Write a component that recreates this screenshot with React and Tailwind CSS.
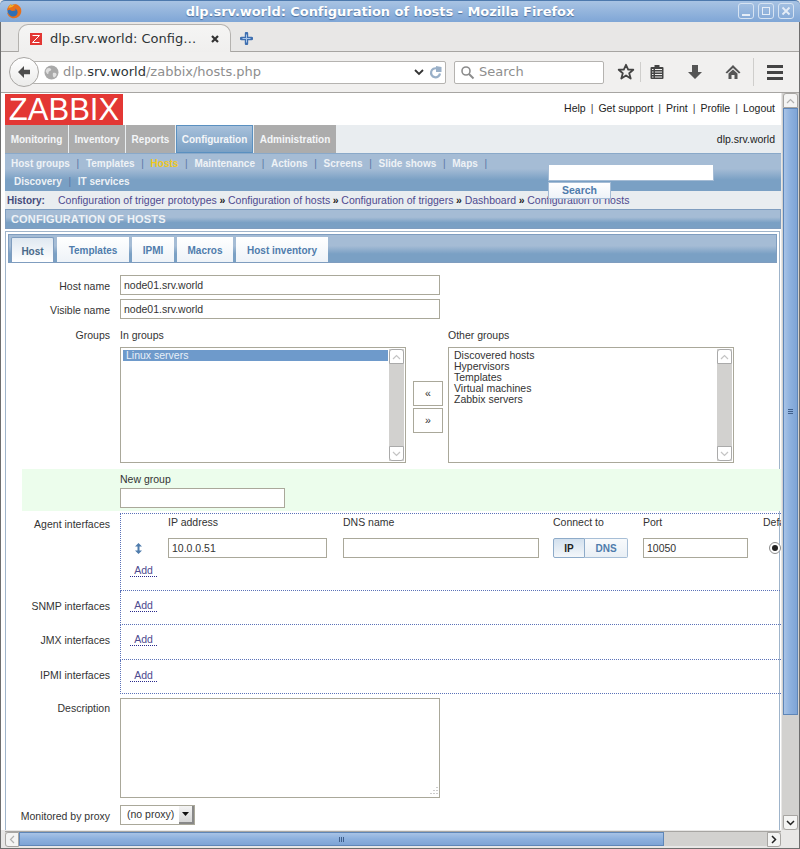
import React from "react";

const page = { fontFamily: '"Liberation Sans", Arial, sans-serif' };
const chrome = { fontFamily: '"DejaVu Sans", sans-serif' };

const blueBar = "bg-[linear-gradient(#a5bcd5_0%,#a5bcd5_40%,#7aa0c4_70%,#7aa0c4_100%)]";

function FirefoxIcon() {
  return (
    <svg width="16" height="16" viewBox="0 0 16 16">
      <circle cx="8" cy="8" r="6.500" fill="#2f6fb5" />
      <path d="M4.500 5c1-1.200 3-1.500 4.500-.8L7 6z" fill="#6fa8dc" />
      <path d="M1 7.500C1.300 4.500 3 2 5.500 1L4.800 3C6.500 1.300 9 .7 11 1.500c2.800 1.200 4.500 3.700 4.300 6.800-.2 3.800-3.300 7-7.300 7-3.700 0-6.500-2.600-7-6l2 2.200c1.300 1.800 3.700 2.500 5.700 1.700 2.300-.9 3.400-3.200 2.700-5.300-.4-1.300-1.500-2.200-2.700-2.500.8.700 1 1.500.8 2.200L6 8 3.800 6.800z" fill="#e8701a" />
      <path d="M2.500 5c.4-1.500 1.500-3 3-4L4.800 3C6 2 7.500 1.500 9 1.500L6 4z" fill="#f6b52a" />
    </svg>
  );
}

function ZabbixFav() {
  return (
    <div className="w-3 h-3 bg-[#e33734] flex items-center justify-center">
      <svg width="10" height="10" viewBox="0 0 10 10">
        <path d="M1.500 1.500h7L1.500 8.500h7" fill="none" stroke="#fff" strokeWidth="1" />
      </svg>
    </div>
  );
}

function TitleBar() {
  return (
    <div className="relative h-[22px] shrink-0 rounded-t-[5px] border-t border-[#4d79ad] bg-[linear-gradient(#a8c3e3,#7fa6d6)] flex items-center justify-center pr-[40px]" style={chrome}>
      <div className="absolute left-[6px] top-[2px]"><FirefoxIcon /></div>
      <span className="text-[13px] font-bold text-white tracking-[-0.05px] [text-shadow:0_1px_1px_#4d6f9c]">dlp.srv.world: Configuration of hosts - Mozilla Firefox</span>
      <div className="absolute right-[6px] top-[2px] flex gap-[4px]">
        {["min", "max", "close"].map((k) => (
          <div key={k} className="w-4 h-4 rounded-[3px] border border-[#d6e3f2] flex items-center justify-center">
            {k === "min" && <div className="w-2 h-[2px] bg-[#e5edf7] mt-[7px]" />}
            {k === "max" && <div className="w-2 h-2 border border-[#e5edf7]" />}
            {k === "close" && (
              <svg width="10" height="10" viewBox="0 0 10 10"><path d="M1.500 1.500l7 7M8.500 1.500l-7 7" stroke="#e5edf7" strokeWidth="1.800" /></svg>
            )}
          </div>
        ))}
      </div>
    </div>
  );
}

function TabStrip() {
  return (
    <div className="relative h-[30px] shrink-0 bg-[#e8e7e6] border-b border-[#a7a5a2] flex items-end pl-[17px]" style={chrome}>
      <div className="relative z-10 mb-[-1px] w-[213px] h-[28px] rounded-t-[10px] border border-b-0 border-[#b4b2af] bg-[linear-gradient(#f5f5f4,#f0efee)] flex items-center pl-[11px]">
        <ZabbixFav />
        <span className="ml-[8px] text-[13px] text-[#2e3436] whitespace-nowrap">dlp.srv.world: Config…</span>
        <svg className="ml-[14px]" width="10" height="10" viewBox="0 0 10 10"><path d="M2 2l6 6M8 2l-6 6" stroke="#333" strokeWidth="2.200" /></svg>
      </div>
      <svg className="ml-[9px] mb-[6px]" width="13" height="13" viewBox="0 0 13 13">
        <path d="M6.500 1.500v10M1.500 6.500h10" stroke="#3e6fb0" strokeWidth="3.400" strokeLinecap="round" />
        <path d="M6.500 2.500v8M2.500 6.500h8" stroke="#a8c6ea" strokeWidth="1" />
      </svg>
    </div>
  );
}

function NavBar() {
  return (
    <div className="relative h-[41px] shrink-0 bg-[#f1f0ef] border-b border-[#a7a5a2] flex items-center" style={chrome}>
      <div className="relative z-10 ml-[8px] w-[30px] h-[30px] rounded-full border border-[#a8a6a3] bg-[linear-gradient(#ffffff,#ebebea)] flex items-center justify-center">
        <svg width="16" height="16" viewBox="0 0 16 16"><path d="M8 2L2 8l6 6v-3.800h6V5.800H8V2z" fill="#4c4c4c" /></svg>
      </div>
      <div className="ml-[-6px] w-[413px] h-[23px] bg-white border border-[#b5b3b0] rounded-r-[2px] flex items-center pl-[10px]">
        <svg width="15" height="15" viewBox="0 0 15 15">
          <circle cx="7.500" cy="7.500" r="7" fill="#a9a9a9" />
          <path d="M3 3.500c2-1 3-.5 4 .5s-1 2-2 2.500 0 2-1 2.500S2 7 1.500 6zM9 8c1.500-.5 3 0 3.500 1s-1.500 3.500-2.500 3.500S8.500 9 9 8z" fill="#e0e0e0" />
        </svg>
        <span className="ml-[4px] text-[13px] text-[#8e8e8e] whitespace-nowrap">dlp.<span className="text-[#2e3436]">srv.world</span>/zabbix/hosts.php</span>
        <div className="ml-auto flex items-center gap-[5px] pr-[3px]">
          <svg width="10" height="7" viewBox="0 0 10 7"><path d="M1 1l4 4 4-4" fill="none" stroke="#333" strokeWidth="1.800" /></svg>
          <svg width="13" height="13" viewBox="0 0 13 13"><path d="M11 7.500A4.500 4.500 0 1 1 8 2.500" fill="none" stroke="#9ab0c8" strokeWidth="2.200" /><path d="M7 0v6h5.500V1z" fill="#9ab0c8" /></svg>
        </div>
      </div>
      <div className="ml-[8px] w-[150px] h-[23px] bg-white border border-[#b5b3b0] rounded-[2px] flex items-center pl-[5px]">
        <svg width="15" height="15" viewBox="0 0 15 15"><circle cx="6" cy="6" r="4" fill="none" stroke="#8c8c8c" strokeWidth="1.600" /><path d="M9 9l4.500 4.500" stroke="#8c8c8c" strokeWidth="2" /></svg>
        <span className="ml-[4px] text-[13px] text-[#8e8e8e]">Search</span>
      </div>
      <svg className="ml-[13px]" width="18" height="18" viewBox="0 0 18 18"><path d="M9 1.800l2.200 4.900h5.100l-4.100 3.500 1.500 5.400L9 12.500l-4.700 3.100 1.500-5.400-4.100-3.500h5.100z" fill="none" stroke="#444" strokeWidth="1.800" strokeLinejoin="round" /></svg>
      <div className="ml-[5px] w-px h-[20px] bg-[#cfcecc]" />
      <svg className="ml-[8px]" width="16" height="16" viewBox="0 0 16 16"><rect x="1.500" y="3" width="13" height="12" rx="1" fill="#444" /><path d="M5.500 1h5v3h-5z" fill="#444" /><path d="M3 5.500h1.500M6 5.500h7M3 8h1.500M6 8h7M3 10.500h1.500M6 10.500h7M3 13h1.500M6 13h7" stroke="#f1f0ef" strokeWidth="1" /></svg>
      <svg className="ml-[22px]" width="16" height="16" viewBox="0 0 16 16"><path d="M5 1h6v7h4l-7 7-7-7h4z" fill="#555" /></svg>
      <svg className="ml-[22px]" width="16" height="16" viewBox="0 0 16 16"><path d="M8 1L0.500 8.500 2 9.500 8 4l6 5.500 1.500-1zM3.500 9.500L8 5.500l4.500 4V15H9.500v-4h-3v4h-3z" fill="#555" /></svg>
      <div className="ml-[12px] w-px h-[28px] bg-[#cfcecc]" />
      <div className="ml-[13px] flex flex-col gap-[3px]">
        <div className="w-4 h-[3px] bg-[#444]" />
        <div className="w-4 h-[3px] bg-[#444]" />
        <div className="w-4 h-[3px] bg-[#444]" />
      </div>
    </div>
  );
}

function TopLinks() {
  const links = ["Help", "Get support", "Print", "Profile", "Logout"];
  return (
    <div className="h-[32px] pt-px flex items-center justify-between pl-[4px] pr-[6px]">
      <div className="w-[118px] h-[31px] bg-[#e33734] flex items-center justify-center overflow-hidden">
        <span className="text-[31px] leading-none text-white">ZABBIX</span>
      </div>
      <div className="text-[10.500px] text-[#222] pb-px">
        {links.map((l, i) => (
          <span key={l}>
            {l}
            {i < links.length - 1 && <span className="mx-[5px] text-[#444]">|</span>}
          </span>
        ))}
      </div>
    </div>
  );
}

function MainMenu() {
  const items = [
    { name: "Monitoring", w: "w-[63px]" },
    { name: "Inventory", w: "w-[56px]" },
    { name: "Reports", w: "w-[49px]" },
    { name: "Configuration", w: "w-[77px]", active: true },
    { name: "Administration", w: "w-[82px]" },
  ];
  return (
    <div className="h-[28px] ml-[4px] bg-[#e9edf0] flex items-stretch">
      {items.map((m) => (
        <div
          key={m.name}
          className={`${m.w} mr-px pt-px flex items-center justify-center text-[10px] font-bold text-[#f4f6f8] ${
            m.active ? "border border-[#5a90c0] bg-[linear-gradient(#a7c0da,#7aa0c4)]" : "bg-[#acacac]"
          }`}
        >
          {m.name}
        </div>
      ))}
      <span className="ml-auto mr-[6px] pt-px self-center text-[10.500px] text-[#222]">dlp.srv.world</span>
    </div>
  );
}

function SubMenu() {
  const row1 = ["Host groups", "Templates", "Hosts", "Maintenance", "Actions", "Screens", "Slide shows", "Maps"];
  const row2 = ["Discovery", "IT services"];
  const renderRow = (row, last) =>
    row.map((s, i) => (
      <span key={s}>
        <span className={s === "Hosts" ? "text-[#f0c81c]" : "text-[#eef2f6]"}>{s}</span>
        {(i < row.length - 1 || last) && <span className="mx-[6.700px] font-normal text-[#5b77a5]">|</span>}
      </span>
    ));
  return (
    <div className={`h-[38px] ml-[4px] border-t border-[#8aa9c9] ${blueBar} text-[10px] font-bold pl-[6px]`}>
      <div className="h-[19px] flex items-center whitespace-nowrap">{renderRow(row1, true)}</div>
      <div className="h-[17px] flex items-center whitespace-nowrap pl-[3px]">{renderRow(row2, false)}</div>
    </div>
  );
}

function History() {
  const items = ["Configuration of trigger prototypes", "Configuration of hosts", "Configuration of triggers", "Dashboard", "Configuration of hosts"];
  return (
    <div className="h-[18px] ml-[4px] pt-px bg-[#e9edf0] flex items-center pl-[2px] text-[10.500px] text-[#4e4a8f] whitespace-nowrap">
      <span className="font-bold w-[51px] text-[10px] text-[#444a7a]">History:</span>
      {items.map((h, i) => (
        <span key={i}>
          {h}
          {i < items.length - 1 && <span className="text-[#222] font-bold mx-[2.700px]">»</span>}
        </span>
      ))}
    </div>
  );
}

function Tabs() {
  const tabs = [
    { name: "Host", w: "w-[43px]", active: true },
    { name: "Templates", w: "w-[72px]" },
    { name: "IPMI", w: "w-[42px]" },
    { name: "Macros", w: "w-[56px]" },
    { name: "Host inventory", w: "w-[92px]" },
  ];
  return (
    <div className={`h-[29px] mx-[2px] mt-[2px] border border-[#7f9dbf] ${blueBar} flex items-end pl-[2px] gap-[3px]`}>
      {tabs.map((t) => (
        <div
          key={t.name}
          className={`${t.w} h-[25px] pt-[2px] flex items-center justify-center text-[10px] font-bold ${
            t.active
              ? "border border-b-0 border-[#7f9dbf] rounded-t-[2px] bg-[linear-gradient(#dfe8f1,#ffffff)] text-[#4a6a8a]"
              : "bg-[linear-gradient(#ffffff,#eef3f8)] text-[#4f7cac]"
          }`}
        >
          {t.name}
        </div>
      ))}
    </div>
  );
}

function TextInput({ value = "", className = "" }) {
  return (
    <div className={`h-[20px] border border-[#aaa89a] bg-white pl-[3px] text-[10.500px] leading-[18px] text-[#333] ${className}`}>
      {value}
    </div>
  );
}

function Label({ children, className = "pt-[4px]" }) {
  return <div className={`w-[103px] shrink-0 mr-[10px] text-right text-[10.500px] text-[#333] ${className}`}>{children}</div>;
}

function ListScroll() {
  return (
    <div className="absolute right-px top-px bottom-px w-[15px] bg-[#d2d1cf] flex flex-col justify-between">
      <div className="h-[15px] bg-white border border-[#aaa] rounded-t-[3px] flex items-center justify-center">
        <svg width="9" height="6" viewBox="0 0 9 6"><path d="M1 5l3.500-3.500L8 5" fill="none" stroke="#c4c4c4" strokeWidth="1.200" /></svg>
      </div>
      <div className="h-[15px] bg-white border border-[#aaa] rounded-b-[3px] flex items-center justify-center">
        <svg width="9" height="6" viewBox="0 0 9 6"><path d="M1 1l3.500 3.500L8 1" fill="none" stroke="#c4c4c4" strokeWidth="1.200" /></svg>
      </div>
    </div>
  );
}

function GroupList({ children }) {
  return (
    <div className="relative w-[286px] h-[116px] border border-[#aaa89a] bg-white text-[10.500px] leading-[11px] text-[#333] pt-[2px] pl-[2px]">
      {children}
      <ListScroll />
    </div>
  );
}

function GroupButton({ children }) {
  return <div className="w-[30px] h-[25px] border border-[#aaa89a] bg-white flex items-center justify-center text-[10.500px] text-[#333]">{children}</div>;
}

function AddLink() {
  return <span className="block ml-[9px] w-[27px] text-center border-b border-dotted border-[#2a2a8c] text-[10.500px] leading-[12px] text-[#4e4a8f]">Add</span>;
}

function InterfaceRow({ label, height, children, labelPt = "pt-[4px]" }) {
  return (
    <div className="flex">
      <Label className={labelPt}>{label}</Label>
      <div className={`${height} flex-1 mr-[-2px] border-l border-b border-dotted border-[#5b72b8]`}>{children}</div>
    </div>
  );
}

function AgentInterfaces() {
  return (
    <div className="min-w-0 whitespace-nowrap">
      <div className="flex h-[24px] pt-px text-[10.500px] text-[#333]">
        <div className="w-[47px]" />
        <div className="w-[175px]">IP address</div>
        <div className="w-[210px]">DNS name</div>
        <div className="w-[90px]">Connect to</div>
        <div className="w-[120px]">Port</div>
        <div>Default</div>
      </div>
      <div className="flex items-center h-[20px]">
        <svg className="ml-[14px] mr-[26px]" width="7" height="11" viewBox="0 0 7 11"><path d="M3.500 0L7 3.500H4.500v4H7L3.500 11 0 7.500h2.500v-4H0z" fill="#4f7cac" /></svg>
        <TextInput value="10.0.0.51" className="w-[159px] mr-[16px]" />
        <TextInput className="w-[196px] mr-[14px]" />
        <div className="w-[32px] h-[20px] border border-[#8eabc9] rounded-l-[2px] bg-[linear-gradient(#d2e0ee,#f4f7fa)] flex items-center justify-center text-[10px] font-bold text-[#222]">IP</div>
        <div className="w-[43px] h-[20px] border border-l-0 border-[#a7bed6] rounded-r-[2px] bg-[linear-gradient(#f8fafc,#e9eff5)] flex items-center justify-center text-[10px] font-bold text-[#4f7cac]">DNS</div>
        <TextInput value="10050" className="w-[105px] ml-[15px] mr-[21px]" />
        <div className="w-[12px] h-[12px] shrink-0 rounded-full border border-[#8e8e8e] bg-white flex items-center justify-center">
          <div className="w-[6px] h-[6px] rounded-full bg-[#222]" />
        </div>
      </div>
      <div className="mt-[6px]"><AddLink /></div>
    </div>
  );
}

function Form() {
  return (
    <div className="pt-[12px] pl-px text-[#333] whitespace-nowrap">
      <div className="flex h-[24px]">
        <Label>Host name</Label>
        <TextInput value="node01.srv.world" className="w-[320px]" />
      </div>
      <div className="flex h-[24px]">
        <Label>Visible name</Label>
        <TextInput value="node01.srv.world" className="w-[320px]" />
      </div>
      <div className="flex">
        <Label className="pt-[5px]">Groups</Label>
        <div className="flex items-start">
          <div>
            <div className="text-[10.500px] h-[24px] pt-[5px]">In groups</div>
            <GroupList>
              <div className="w-[265px] pl-[3px] h-[11px] bg-[#6e9acb] text-[#e8f0f8]">Linux servers</div>
            </GroupList>
          </div>
          <div className="mt-[58px] ml-[7px] mr-[5px] flex flex-col gap-[2px]">
            <GroupButton>«</GroupButton>
            <GroupButton>»</GroupButton>
          </div>
          <div>
            <div className="text-[10.500px] h-[24px] pt-[5px]">Other groups</div>
            <GroupList>
              <div className="pl-[3px]">
                {["Discovered hosts", "Hypervisors", "Templates", "Virtual machines", "Zabbix servers"].map((g) => (
                  <div key={g}>{g}</div>
                ))}
              </div>
            </GroupList>
          </div>
        </div>
      </div>
      <div className="mt-[6px] ml-[15px] mr-[-2px] h-[42px] bg-[#ecfdec] pl-[98px] pt-[3px]">
        <div className="text-[10.500px] h-[16px]">New group</div>
        <TextInput className="w-[165px]" />
      </div>
      <div className="mt-[2px] flex">
        <div className="w-[113px]" />
        <div className="flex-1 mr-[-2px] border-t border-dotted border-[#5b72b8]" />
      </div>
      <InterfaceRow label="Agent interfaces" height="h-[77px]" labelPt="pt-[3px]">
        <AgentInterfaces />
      </InterfaceRow>
      <InterfaceRow label="SNMP interfaces" height="h-[34px]" labelPt="pt-[8px]">
        <div className="pt-[8px]"><AddLink /></div>
      </InterfaceRow>
      <InterfaceRow label="JMX interfaces" height="h-[35px]" labelPt="pt-[8px]">
        <div className="pt-[8px]"><AddLink /></div>
      </InterfaceRow>
      <InterfaceRow label="IPMI interfaces" height="h-[34px]" labelPt="pt-[8px]">
        <div className="pt-[9px]"><AddLink /></div>
      </InterfaceRow>
      <div className="flex mt-[4px]">
        <Label className="pt-[3px]">Description</Label>
        <div className="relative w-[320px] h-[100px] border border-[#aaa89a] bg-white">
          <svg className="absolute right-px bottom-px" width="10" height="10" viewBox="0 0 10 10">
            <path d="M9 1v1M9 4v1M6 4v1M9 7v1M6 7v1M3 7v1" stroke="#999" strokeWidth="1" />
          </svg>
        </div>
      </div>
      <div className="flex mt-[7px]">
        <Label className="pt-[4px]">Monitored by proxy</Label>
        <div className="w-[75px] h-[20px] border border-[#aaa89a] bg-white flex items-center justify-between text-[10.500px] pl-[6px]">
          <span>(no proxy)</span>
          <div className="w-[15px] h-[18px] bg-[linear-gradient(#f4f4f4,#d6d6d6)] border-r-2 border-b-2 border-[#888] flex items-center justify-center">
            <svg width="7" height="4" viewBox="0 0 7 4"><path d="M0 0h7L3.500 4z" fill="#111" /></svg>
          </div>
        </div>
      </div>
    </div>
  );
}

function VScroll() {
  return (
    <div className="w-[18px] shrink-0 flex flex-col bg-[#d2d1cf] border-l border-[#e8e7e6] pl-px pr-px">
      <div className="h-[15px] bg-[#f4f4f3] border border-[#a7a5a2] rounded-t-[3px] flex items-center justify-center">
        <svg width="9" height="6" viewBox="0 0 9 6"><path d="M1 5l3.500-3.500L8 5" fill="none" stroke="#b0b0b0" strokeWidth="1.200" /></svg>
      </div>
      <div className="h-[607px] bg-[linear-gradient(90deg,#a8c3e6,#8cb0de,#7ea4d6)] border border-[#5e86b8] flex items-center justify-center">
        <div className="flex flex-col gap-px">
          <div className="w-[5px] h-px bg-[#3f5f8c]" />
          <div className="w-[5px] h-px bg-[#3f5f8c]" />
          <div className="w-[5px] h-px bg-[#3f5f8c]" />
        </div>
      </div>
      <div className="flex-1" />
      <div className="h-[15px] bg-[#f4f4f3] border border-[#a7a5a2] rounded-b-[3px] flex items-center justify-center">
        <svg width="9" height="6" viewBox="0 0 9 6"><path d="M1 1l3.500 3.500L8 1" fill="none" stroke="#222" strokeWidth="1.500" /></svg>
      </div>
    </div>
  );
}

function HScroll() {
  return (
    <div className="h-[18px] shrink-0 bg-[#e8e7e6] pl-[4px] pr-[18px] flex items-start">
      <div className="h-[15px] mt-px flex-1 flex bg-[#d2d1cf] border-t border-[#a7a5a2]">
        <div className="w-[14px] h-[15px] bg-[#f4f4f3] border border-[#a7a5a2] rounded-l-[3px] flex items-center justify-center">
          <svg width="6" height="9" viewBox="0 0 6 9"><path d="M5 1L1.500 4.500 5 8" fill="none" stroke="#b0b0b0" strokeWidth="1.200" /></svg>
        </div>
        <div className="w-[645px] bg-[linear-gradient(#a8c3e6,#8cb0de,#7ea4d6)] border border-[#5e86b8] flex items-center justify-center gap-px">
          <div className="w-px h-[5px] bg-[#3f5f8c]" />
          <div className="w-px h-[5px] bg-[#3f5f8c]" />
          <div className="w-px h-[5px] bg-[#3f5f8c]" />
        </div>
        <div className="flex-1" />
        <div className="w-[14px] h-[15px] bg-[#f4f4f3] border border-[#a7a5a2] rounded-r-[3px] flex items-center justify-center">
          <svg width="6" height="9" viewBox="0 0 6 9"><path d="M1 1l3.500 3.500L1 8" fill="none" stroke="#222" strokeWidth="1.500" /></svg>
        </div>
      </div>
    </div>
  );
}

export default function App() {
  return (
    <div className="w-[800px] h-[849px] overflow-hidden flex flex-col bg-[#e8e7e6]">
      <TitleBar />
      <div className="flex-1 min-h-0 flex flex-col border-x border-b border-[#6e6e6e]">
        <TabStrip />
        <NavBar />
        <div className="flex-1 min-h-0 flex">
          <div className="relative w-[780px] shrink-0 overflow-hidden bg-white" style={page}>
            <TopLinks />
            <MainMenu />
            <SubMenu />
            <History />
            <div className={`h-[20px] ml-[4px] border border-[#7f9dbf] ${blueBar} flex items-center pl-[5px] text-[11px] font-bold tracking-[0.15px] text-[#eef2f6]`}>
              CONFIGURATION OF HOSTS
            </div>
            <div className="mt-[2px] ml-[4px] mr-px border-l border-t border-r border-[#9fb4ca] h-[700px]">
              <Tabs />
              <Form />
            </div>
            <div className="absolute left-[547px] top-[71px] w-[166px] h-[17px] bg-white border border-[#a5bcd5]" />
            <div className="absolute left-[547px] top-[89px] w-[63px] h-[17px] pt-px bg-[linear-gradient(#ffffff,#eef3f8)] border border-[#a5bcd5] flex items-center justify-center text-[10.500px] font-bold text-[#4f7cac]">Search</div>
          </div>
          <VScroll />
        </div>
        <HScroll />
      </div>
    </div>
  );
}
